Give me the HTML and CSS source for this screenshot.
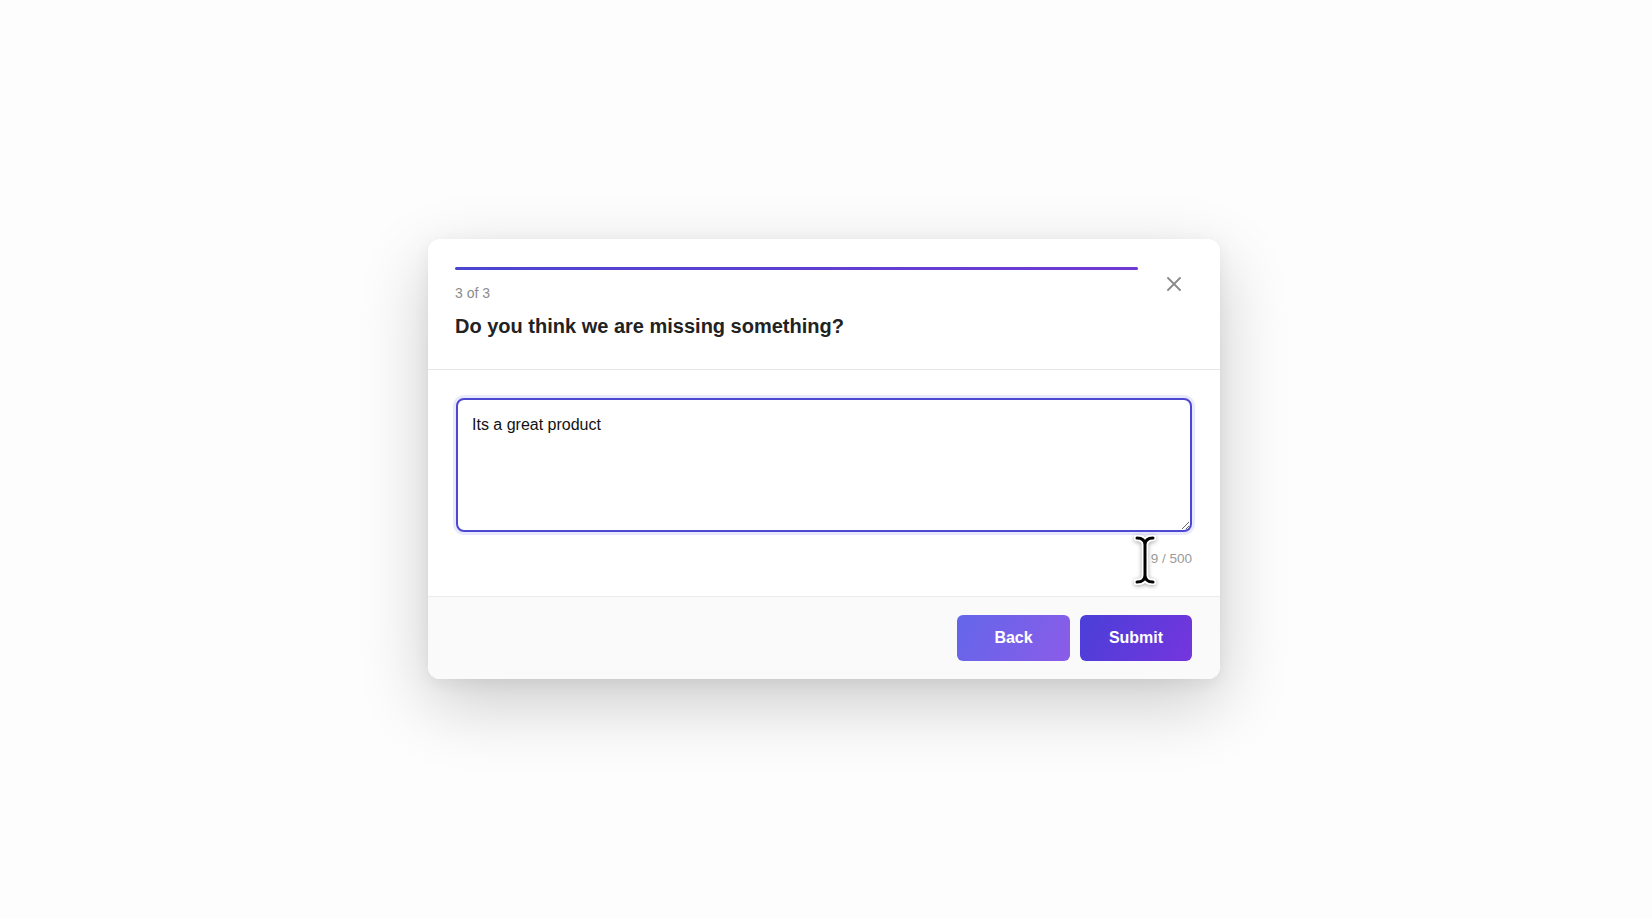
FILE: index.html
```html
<!DOCTYPE html>
<html lang="en">
<head>
<meta charset="utf-8">
<title>Feedback</title>
<link rel="stylesheet" href="styles.css">
</head>
<body>
  <div class="card">
    <div class="card-header">
      <div class="header-main">
        <div class="progress"><div class="progress-fill"></div></div>
        <div class="step">3 of 3</div>
        <h2 class="question">Do you think we are missing something?</h2>
      </div>
      <button class="close" aria-label="Close">
        <svg width="14" height="14" viewBox="0 0 14 14"><path d="M1 1 L13 13 M13 1 L1 13" stroke="#8a8a8a" stroke-width="1.8" stroke-linecap="round" fill="none"/></svg>
      </button>
    </div>
    <div class="card-body">
      <textarea class="answer">Its a great product</textarea>
      <div class="counter">9 / 500</div>
    </div>
    <div class="card-footer">
      <button class="btn btn-back">Back</button>
      <button class="btn btn-submit">Submit</button>
    </div>
    <svg class="cursor" width="22" height="50" viewBox="0 0 22 50">
      <path d="M3 3 C8 3, 11 5, 11 10 L11 40 C11 45, 8 47, 3 47 M19 3 C14 3, 11 5, 11 10 M11 40 C11 45, 14 47, 19 47" stroke="#fff" stroke-width="6.5" fill="none" stroke-linecap="round"/>
      <path d="M3 3 C8 3, 11 5, 11 10 L11 40 C11 45, 8 47, 3 47 M19 3 C14 3, 11 5, 11 10 M11 40 C11 45, 14 47, 19 47" stroke="#000" stroke-width="3" fill="none" stroke-linecap="round"/>
    </svg>
  </div>
</body>
</html>
```

FILE: styles.css
```css
* { box-sizing: border-box; }

html, body {
  margin: 0;
  height: 100%;
}

body {
  background: #fdfdfd;
  font-family: "Liberation Sans", Arial, Helvetica, sans-serif;
  display: flex;
  align-items: center;
  justify-content: center;
  padding: 0 4px 2px 0;
}

.card {
  position: relative;
  width: 792px;
  background: #ffffff;
  border-radius: 12px;
  box-shadow: 0 24px 70px rgba(0, 0, 0, 0.2), 0 4px 16px rgba(0, 0, 0, 0.06);
}

.card-header {
  display: flex;
  align-items: flex-start;
  gap: 18px;
  padding: 28px 28px 29px 27px;
  border-bottom: 1px solid #e6e6e6;
}

.header-main {
  flex: 1;
}

.progress {
  height: 3px;
  border-radius: 2px;
  background: #ececec;
  margin-bottom: 13px;
}

.progress-fill {
  height: 100%;
  width: 100%;
  border-radius: 2px;
  background: linear-gradient(90deg, #4b46cf, #7039d2);
}

.step {
  font-size: 14px;
  line-height: 20px;
  color: #8c8c8c;
  margin-bottom: 9px;
}

.question {
  margin: 0;
  font-size: 20px;
  line-height: 28px;
  font-weight: 700;
  color: #222222;
}

.close {
  width: 36px;
  height: 36px;
  margin-top: -1px;
  border: none;
  background: transparent;
  padding: 0;
  display: flex;
  align-items: center;
  justify-content: center;
  cursor: pointer;
}

.card-body {
  padding: 28px;
  display: flex;
  flex-direction: column;
}

.answer {
  display: block;
  width: 100%;
  height: 134px;
  border: 2px solid #4d47d1;
  border-radius: 8px;
  box-shadow: 0 0 0 3px rgba(99, 102, 241, 0.14);
  padding: 13px 14px 14px;
  font-family: "Liberation Sans", Arial, Helvetica, sans-serif;
  font-size: 16px;
  line-height: 1.5;
  color: #111111;
  resize: vertical;
  outline: none;
  background: #ffffff;
}

.counter {
  margin-top: 18px;
  align-self: flex-end;
  font-size: 13.5px;
  line-height: 18px;
  color: #9a9a9a;
}

.card-footer {
  display: flex;
  justify-content: flex-end;
  gap: 10px;
  padding: 18px 28px;
  border-top: 1px solid #ebebeb;
  background: #fafafa;
  border-radius: 0 0 12px 12px;
}

.btn {
  width: 112px;
  height: 46px;
  border: none;
  border-radius: 6px;
  color: #ffffff;
  font-family: "Liberation Sans", Arial, Helvetica, sans-serif;
  font-size: 16px;
  font-weight: 700;
  cursor: pointer;
}

.btn-back {
  width: 113px;
  background: linear-gradient(120deg, #6366ea, #8b5ce8);
}

.btn-submit {
  background: linear-gradient(120deg, #4a3fd8, #7535dd);
}

.cursor {
  position: absolute;
  left: 706px;
  top: 296px;
  filter: drop-shadow(0 1px 2px rgba(0, 0, 0, 0.35));
  pointer-events: none;
}
```
